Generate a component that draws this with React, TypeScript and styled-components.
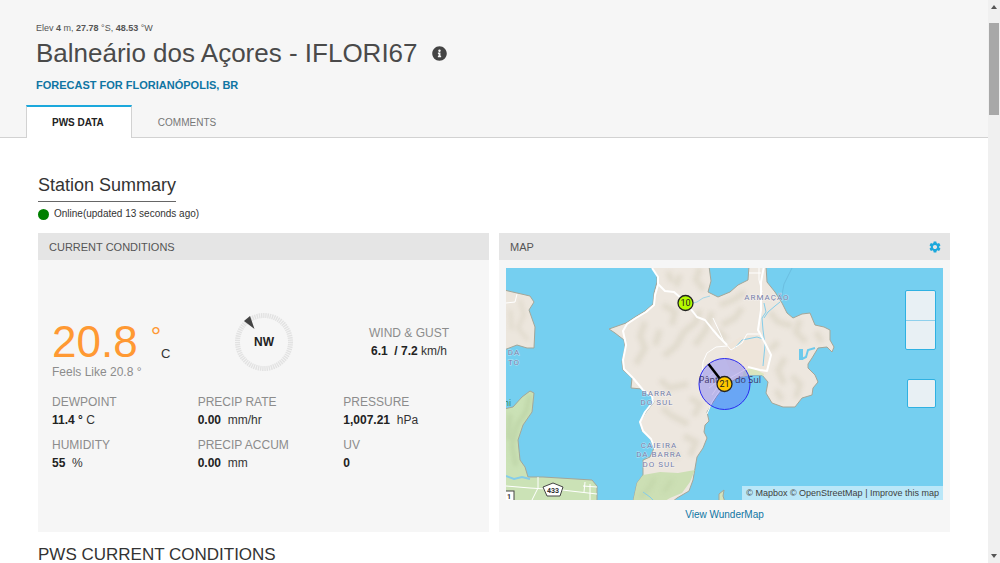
import React from "react";
import styled, { createGlobalStyle } from "styled-components";
import { FaInfoCircle } from "react-icons/fa";
import { MdSettings } from "react-icons/md";

const GlobalStyle = createGlobalStyle`
  * { box-sizing: border-box; }
  body {
    margin: 0;
    background: #fff;
    color: #333;
    font-family: "Liberation Sans", Arial, sans-serif;
    font-size: 12px;
  }
  h1, h2, h3, p, dl, dd, dt { margin: 0; font-weight: 400; }
  a { color: #0f75a3; text-decoration: none; }
  button { font: inherit; border: 0; padding: 0; background: none; cursor: pointer; }
`;

const Shell = styled.div`
  display: grid;
  grid-template-columns: minmax(0, 1fr) 12px;
  height: 100vh;
  overflow: hidden;
`;

const Page = styled.div`
  overflow: hidden;
`;

const ScrollRail = styled.div`
  display: flex;
  flex-direction: column;
  justify-content: space-between;
  background: #f0f0f0;
`;

const RailTop = styled.div`
  display: flex;
  flex-direction: column;
  gap: 9px;
`;

const RailButton = styled.button`
  display: flex;
  justify-content: center;
  align-items: center;
  width: 100%;
  height: 14px;
`;

const Thumb = styled.div`
  height: 92px;
  margin: 0 1px;
  background: #a8a8a8;
`;

const Header = styled.header`
  background: #f6f6f6;
  padding: 22px 0 0 36px;
  border-bottom: 1px solid #d2d2d2;
`;

const Elevation = styled.p`
  font-size: 9px;
  line-height: 12px;
  color: #555;
`;

const TitleRow = styled.div`
  display: flex;
  align-items: center;
  gap: 14px;
  height: 38px;
  color: #4a4a4a;
`;

const Title = styled.h1`
  font-size: 26px;
  line-height: 38px;
`;

const IconButton = styled.button<{ $color: string }>`
  display: flex;
  color: ${(p) => p.$color};
`;

const ForecastLink = styled.a`
  display: block;
  margin-top: 6px;
  font-size: 11px;
  line-height: 14px;
  font-weight: 700;
`;

const Tabs = styled.nav`
  display: flex;
  margin: 13px 0 -1px -10px;
`;

const Tab = styled.button<{ $active?: boolean }>`
  height: 33px;
  padding: 0 27px 1px 25px;
  font-size: 10px;
  font-weight: ${(p) => (p.$active ? 700 : 400)};
  color: ${(p) => (p.$active ? "#222" : "#777")};
  background: ${(p) => (p.$active ? "#fff" : "transparent")};
  border: 1px solid ${(p) => (p.$active ? "#d2d2d2" : "transparent")};
  border-top: 2px solid ${(p) => (p.$active ? "#1ba8dc" : "transparent")};
  border-bottom: 0;
`;

const Main = styled.main`
  padding: 35px 38px 0;
`;

const SummaryTitle = styled.h2`
  display: inline-block;
  font-size: 18px;
  line-height: 24px;
  padding-bottom: 4px;
  border-bottom: 1px solid #666;
`;

const Status = styled.p`
  display: flex;
  align-items: center;
  gap: 5px;
  margin: 5px 0 12px;
  font-size: 10px;
  line-height: 14px;
`;

const StatusDot = styled.span`
  width: 11px;
  height: 11px;
  border-radius: 50%;
  background: #008000;
`;

const Panels = styled.div`
  display: grid;
  grid-template-columns: repeat(2, minmax(0, 1fr));
  gap: 10px;
`;

const Panel = styled.section`
  display: flex;
  flex-direction: column;
  background: #f6f6f6;
`;

const PanelHeader = styled.div`
  display: flex;
  align-items: center;
  justify-content: space-between;
  height: 27px;
  padding: 0 8px 0 11px;
  background: #e5e5e5;
  color: #555;
`;

const PanelTitle = styled.h3`
  font-size: 11px;
`;

const TopReadings = styled.div`
  display: grid;
  grid-template-columns: repeat(3, 1fr);
  align-items: center;
  padding: 52px 14px 11px;
`;

const Temperature = styled.div`
  display: flex;
  align-items: flex-start;
  height: 49px;
  color: #ff9933;
`;

const TempValue = styled.span`
  font-size: 44px;
  line-height: 56px;
`;

const TempDegree = styled.span`
  margin-left: 13px;
  font-size: 26px;
  line-height: 44px;
`;

const TempUnit = styled.span`
  align-self: flex-end;
  font-size: 13px;
  line-height: 18px;
  color: #333;
`;

const Muted = styled.p`
  line-height: 18px;
  color: #8c8c8c;
`;

const Compass = styled.svg`
  display: block;
  justify-self: center;
  margin-bottom: 10px;
`;

const Wind = styled.div`
  justify-self: end;
  margin: 0 26px 10px 0;
  text-align: center;
`;

const ReadingGrid = styled.dl`
  display: grid;
  grid-template-columns: repeat(3, 1fr);
  row-gap: 7px;
  padding: 0 0 60px 14px;
`;

const ReadingLabel = styled.dt`
  line-height: 18px;
  color: #8c8c8c;
`;

const ReadingValue = styled.dd`
  line-height: 18px;
  white-space: pre;

  b { color: #222; }
`;

const MapFrame = styled.div`
  position: relative;
  margin: 8px 7px 0;
  height: 232px;
  background: #75cff0;
`;

const MapDrawing = styled.svg`
  display: block;
  width: 100%;
  height: 100%;
`;

const District = styled.text`
  font-family: Roboto, sans-serif;
  font-size: 8px;
  letter-spacing: 1px;
  fill: #747ca8;
  stroke: #fff;
  stroke-opacity: 0.5;
  stroke-width: 1px;
  paint-order: stroke;
  text-anchor: middle;
`;

const Village = styled.text`
  font-family: "Open Sans", sans-serif;
  font-size: 9px;
  font-weight: 500;
  fill: #3b3566;
`;

const PinText = styled.text`
  font-family: Roboto, sans-serif;
  font-size: 9px;
  fill: #222;
  text-anchor: middle;
`;

const MapControls = styled.div`
  position: absolute;
  top: 22px;
  right: 7px;
  display: flex;
  flex-direction: column;
  align-items: flex-end;
  gap: 29px;
`;

const ZoomGroup = styled.div`
  display: grid;
  border: 1px solid #2fb1e2;
  border-radius: 2px;
  background: #e8f0f4;

  button + button { border-top: 1px solid #8ed0ec; }
`;

const ZoomButton = styled.button`
  width: 29px;
  height: 29px;
`;

const LayerButton = styled.button`
  width: 29px;
  height: 29px;
  border: 1px solid #2fb1e2;
  border-radius: 2px;
  background: #e8f0f4;
`;

const Attribution = styled.div`
  position: absolute;
  right: 0;
  bottom: 0;
  padding: 0 4px;
  font-size: 9px;
  line-height: 14px;
  background: rgba(255, 255, 255, 0.5);
  color: #404040;

  a { color: #404040; }
`;

const MapLink = styled.a`
  align-self: center;
  margin-top: 8px;
  font-size: 10px;
  line-height: 14px;
`;

const SectionTitle = styled.h2`
  margin-top: 12px;
  font-size: 17px;
  line-height: 22px;
`;

const MAINLAND =
  "M650 266 L657 275 L657 282 L654 293 L653 304 L645 311 L635 317 L626 323 L609 329 L615 333 L624 340 L625 347 L622 362 L623 370 L632 378 L631 388 L642 389 L651 395 L654 402 L646 412 L640 422 L642 431 L650 438 L654 448 L650 457 L643 460 L643 475 L637 483 L633 502 L672 502 L677 498 L689 491 L693 480 L697 457 L703 448 L707 438 L704 432 L705 425 L709 421 L707 412 L717 396 L727 384 L738 378 L750 375 L762 375 L768 382 L766 393 L772 403 L783 407 L795 407 L802 398 L812 395 L813 388 L818 382 L815 375 L808 368 L808 364 L812 358 L818 348 L827 347 L832 352 L834 347 L830 340 L830 330 L824 327 L815 325 L810 313 L802 314 L793 318 L787 313 L782 303 L775 292 L767 282 L766 266 L749 266 L748 280 L738 285 L730 292 L718 297 L708 292 L711 281 L709 266 Z";

const READINGS = [
  { label: "DEWPOINT", value: "11.4 °", unit: " C" },
  { label: "PRECIP RATE", value: "0.00", unit: "  mm/hr" },
  { label: "PRESSURE", value: "1,007.21", unit: "  hPa" },
  { label: "HUMIDITY", value: "55", unit: "  %" },
  { label: "PRECIP ACCUM", value: "0.00", unit: "  mm" },
  { label: "UV", value: "0", unit: "" },
];

function IslandMap() {
  return (
    <MapDrawing viewBox="506 268 437 232" preserveAspectRatio="xMidYMid slice" role="img" aria-label="Station map">
      <defs>
        <clipPath id="land"><path d={MAINLAND} /></clipPath>
        <filter id="soft" x="-20%" y="-20%" width="140%" height="140%"><feGaussianBlur stdDeviation="2" /></filter>
      </defs>

      <g stroke="#a3a699" strokeWidth="1">
        <path fill="#ece6dd" d="M504 290 L517 293 L530 296 L534 302 L529 310 L535 327 L534 348 L527 348 L517 345 L504 350 Z" />
        <path fill="#cbe2b6" d="M504 409 L513 407 L522 397 L530 391 L534 393 L532 412 L523 425 L518 440 L520 460 L525 467 L528 477 L543 477 L592 480 L597 486 L597 502 L504 502 Z" />
        <path fill="#ede7df" d={MAINLAND} />
        <path fill="#d5e4bd" d="M719 502 L719 494 L724 490 L723 496 L725 502 Z" />
      </g>

      <g fill="none" stroke="#b5cb9d" strokeWidth="5" opacity="0.5" filter="url(#soft)">
        <path d="M530 395 L526 412 L517 425 L512 446 L516 466 M510 414 L508 440" />
      </g>
      <g fill="none" stroke="#d5cfbd" strokeWidth="4" opacity="0.45" filter="url(#soft)">
        <path d="M520 300 L524 315 L518 328 L528 340 M510 310 L512 330" />
      </g>

      <g clipPath="url(#land)">
        <path fill="#ccdfb4" d="M630 478 L643 475 L660 472 L678 473 L695 470 L690 482 L682 493 L670 498 L660 504 L628 504 Z" />
        <g fill="none" stroke="#d3cdba" strokeWidth="6" opacity="0.45" filter="url(#soft)">
          <path d="M700 268 L696 280 L704 290 M680 275 L676 286 M668 272 L672 282" />
          <path d="M663 305 L675 312 L672 325 M700 310 L696 322 L684 332 L676 346 L664 356" />
          <path d="M645 322 L640 336 L645 348 L636 364 M660 330 L655 345 M712 312 L706 330 L695 345" />
          <path d="M720 305 L733 300 L745 292 M722 325 L735 318 L742 308 M726 340 L718 330" />
          <path d="M770 312 L778 322 L792 326 M800 320 L796 332 L806 342 M778 342 L770 350 M816 332 L822 342 M785 358 L778 370 L784 384" />
          <path d="M792 376 L800 384 L796 398 M776 390 L782 400" />
          <path d="M660 380 L670 388 L688 384 M690 398 L700 404 L694 416 M662 408 L672 416 L688 424 M684 436 L696 442 L690 456 M668 446 L678 458" />
        </g>
        <g fill="none" stroke="#bfd2a6" strokeWidth="4" opacity="0.6" filter="url(#soft)">
          <path d="M655 478 L648 490 L640 497 M672 480 L664 492" />
        </g>
        <path fill="#eee5da" d="M728 345 L740 337 L760 336 L763 352 L768 358 L766 375 L745 377 L730 370 L724 355 Z" />
        <path fill="#dbe6be" d="M744 371 L752 367 L764 374 L762 379 L742 379 Z" />
      </g>

      <g fill="none" stroke="#84cdea" strokeWidth="1">
        <path d="M693 303 L697 302 L703 298 L710 296" opacity="0.7" />
        <path d="M764 303 L766 312 L762 318 L763 330 L765 345 L763 366" />
        <path d="M780 302 L775 306 L768 312 L764 318" />
        <path d="M735 348 L742 340 L757 337 L763 339" />
        <path d="M643 492 L650 497 L655 502" />
        <path d="M506 476 L514 479 L522 477 L530 479" strokeWidth="2" />
      </g>
      <path d="M792 268 L784 284 L781 300" fill="none" stroke="#66b6d8" strokeWidth="1" opacity="0.7" />
      <g fill="none" stroke="#6dcaec">
        <path d="M801 349 L801 360" strokeWidth="4" />
        <path d="M802 359 L806 357 L808 350 L815 348" strokeWidth="2" />
      </g>

      <g fill="none" stroke="#fff" strokeWidth="2" strokeLinejoin="round">
        <path d="M652 268 L658 277 L658 285 L655 295 L654 305 L646 312 L636 318 L627 324 L623 331 L626 345 L623 360 L624 369 L633 378" />
        <path d="M633 378 L643 390 L652 396 L653 402 L645 412 L640 422 L643 431 L651 439 L655 449" />
        <path d="M658 284 L665 291 L674 292 L681 298 L690 308 L697 317 L705 320 L713 330 L719 337 L727 345" />
        <path d="M764 266 L761 282 L761 310 L758 330 L764 341 L771 355 L767 371 L760 370 L748 367" />
        <path d="M759 268 L759 280 L762 292" strokeWidth="1" />
        <path d="M713 318 L720 333 L724 342 L731 350 L742 343 L747 334 L759 334 M727 346 L716 347 L707 353 L703 362 L702 378" strokeWidth="1" />
        <path d="M720 390 L712 402 L707 414 M749 273 L761 273" strokeWidth="1" />
        <path d="M506 303 L515 302 L517 294 M506 486 L530 488 L562 490 L597 494 M538 477 L538 488 L532 500 M585 482 L584 492 M590 484 L590 500 M583 486 L597 487" strokeWidth="1" />
      </g>

      <District x="767" y="300">ARMAÇÃO</District>
      <District x="657" y="396">BARRA</District>
      <District x="657" y="405">DO SUL</District>
      <District x="659" y="448">CAIEIRA</District>
      <District x="659" y="457">DA BARRA</District>
      <District x="659" y="467">DO SUL</District>
      <District x="514" y="355">DA</District>
      <District x="514" y="365">TO</District>
      <text x="504" y="406" fontFamily="Noto Sans" fontSize="8" fill="#3c8a50">ni</text>

      <g fill="#fff" stroke="#444" strokeWidth="1">
        <path d="M553 483 L563 487 L560 496 L547 496 L543 487 Z" strokeLinejoin="round" />
        <rect x="500" y="491" width="14" height="12" />
      </g>
      <text x="553" y="493" fontFamily="Roboto" fontSize="7" fontWeight="700" fill="#333" textAnchor="middle">433</text>
      <text x="507" y="499" fontFamily="Roboto" fontSize="7" fontWeight="700" fill="#333">1</text>

      <circle cx="724.5" cy="384" r="25.5" fill="#5050ff" fillOpacity="0.32" stroke="#2a2af0" strokeWidth="1" />
      <path d="M709 388 L718 381 M712 395 L722 380 M730 378 L746 369 M704 380 L716 371" stroke="#d6cbf4" fill="none" opacity="0.7" />
      <Village x="699" y="383">Pânt</Village>
      <Village x="761" y="383" textAnchor="end">do Sul</Village>
      <path d="M708.5 364 L724 384" stroke="#000" strokeWidth="2.5" />

      <g stroke="#222" strokeWidth="1.3">
        <circle cx="685.5" cy="303" r="7.5" fill="#b4fa00" />
        <circle cx="724.5" cy="384" r="7.5" fill="#ffc800" />
      </g>
      <PinText x="685.5" y="306">10</PinText>
      <PinText x="724.5" y="387">21</PinText>
    </MapDrawing>
  );
}

export default function App() {
  return (
    <>
      <GlobalStyle />
      <Shell>
        <Page>
          <Header>
            <Elevation>
              Elev <b>4</b> m, <b>27.78</b> °S, <b>48.53</b> °W
            </Elevation>
            <TitleRow>
              <Title>Balneário dos Açores - IFLORI67</Title>
              <IconButton $color="#444" aria-label="Station information"><FaInfoCircle size={15} /></IconButton>
            </TitleRow>
            <ForecastLink href="#forecast">FORECAST FOR FLORIANÓPOLIS, BR</ForecastLink>
            <Tabs>
              <Tab $active>PWS DATA</Tab>
              <Tab>COMMENTS</Tab>
            </Tabs>
          </Header>

          <Main>
            <SummaryTitle>Station Summary</SummaryTitle>
            <Status>
              <StatusDot />
              Online(updated 13 seconds ago)
            </Status>

            <Panels>
              <Panel>
                <PanelHeader><PanelTitle>CURRENT CONDITIONS</PanelTitle></PanelHeader>
                <TopReadings>
                  <div>
                    <Temperature>
                      <TempValue>20.8</TempValue>
                      <TempDegree>°</TempDegree>
                      <TempUnit>C</TempUnit>
                    </Temperature>
                    <Muted>Feels Like 20.8 °</Muted>
                  </div>
                  <Compass width="60" height="60" viewBox="0 0 60 60" role="img" aria-label="Wind from NW">
                    <circle cx="30" cy="30" r="26.5" fill="none" stroke="#e2e2e2" strokeWidth="5" strokeDasharray="1.4 0.8" />
                    <path d="M10 9 L16 4 L20.5 17 Z" fill="#444" />
                    <text x="30" y="34" fontSize="12" fontWeight="700" fill="#222" textAnchor="middle">NW</text>
                  </Compass>
                  <Wind>
                    <Muted>WIND &amp; GUST</Muted>
                    <ReadingValue as="p"><b>6.1  / 7.2</b> km/h</ReadingValue>
                  </Wind>
                </TopReadings>
                <ReadingGrid>
                  {READINGS.map((r) => (
                    <div key={r.label}>
                      <ReadingLabel>{r.label}</ReadingLabel>
                      <ReadingValue><b>{r.value}</b>{r.unit}</ReadingValue>
                    </div>
                  ))}
                </ReadingGrid>
              </Panel>

              <Panel>
                <PanelHeader>
                  <PanelTitle>MAP</PanelTitle>
                  <IconButton $color="#1ba8dc" aria-label="Map settings"><MdSettings size={14} /></IconButton>
                </PanelHeader>
                <MapFrame>
                  <IslandMap />
                  <MapControls>
                    <ZoomGroup>
                      <ZoomButton aria-label="Zoom in" />
                      <ZoomButton aria-label="Zoom out" />
                    </ZoomGroup>
                    <LayerButton aria-label="Locate station" />
                  </MapControls>
                  <Attribution>
                    <a href="#mapbox">© Mapbox</a> <a href="#osm">© OpenStreetMap</a> | <a href="#improve">Improve this map</a>
                  </Attribution>
                </MapFrame>
                <MapLink href="#wundermap">View WunderMap</MapLink>
              </Panel>
            </Panels>

            <SectionTitle>PWS CURRENT CONDITIONS</SectionTitle>
          </Main>
        </Page>

        <ScrollRail>
          <RailTop>
            <RailButton aria-label="Scroll up">
              <svg width="6" height="4" viewBox="0 0 6 4"><path d="M0 4 L3 0 L6 4 Z" fill="#555" /></svg>
            </RailButton>
            <Thumb />
          </RailTop>
          <RailButton aria-label="Scroll down">
            <svg width="6" height="4" viewBox="0 0 6 4"><path d="M0 0 L3 4 L6 0 Z" fill="#555" /></svg>
          </RailButton>
        </ScrollRail>
      </Shell>
    </>
  );
}
